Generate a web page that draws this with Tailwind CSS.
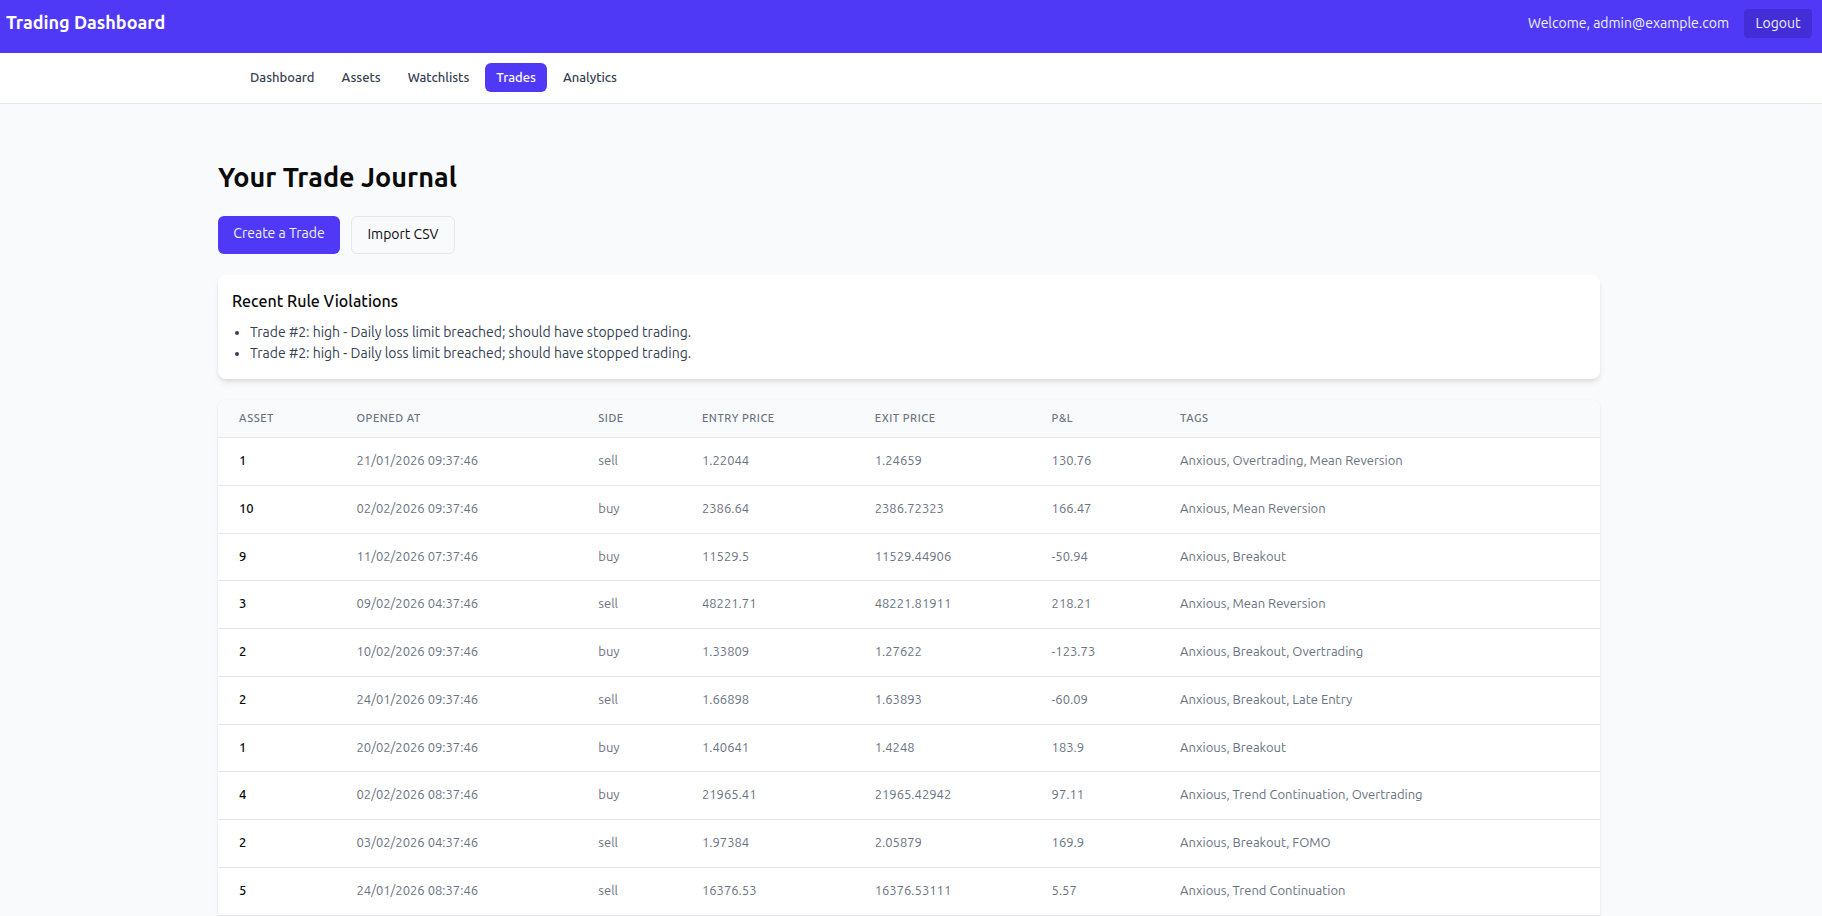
<!DOCTYPE html>
<html lang="en">
<head>
<meta charset="utf-8">
<meta name="viewport" content="width=device-width, initial-scale=1">
<title>Trading Dashboard</title>
<script src="https://cdn.jsdelivr.net/npm/@tailwindcss/browser@4"></script>
</head>
<body class="min-h-screen overflow-hidden bg-gray-50 font-['Ubuntu','Noto_Sans',sans-serif] text-sm text-neutral-950">
<header class="flex h-[53px] items-start justify-between bg-indigo-600 pt-[9px] pr-[10px] pl-[6px] text-white">
  <h1 class="text-lg leading-[26px] font-semibold">Trading Dashboard</h1>
  <div class="flex items-center gap-[15px]">
    <span class="pb-0.5 text-indigo-50">Welcome, admin@example.com</span>
    <button type="button" class="h-[29px] min-w-[68px] rounded-sm bg-indigo-700 pb-0.5 text-center text-indigo-50">Logout</button>
  </div>
</header>
<nav class="border-b border-gray-200 bg-white pr-1">
  <div class="mx-auto flex h-[50px] max-w-[1382px] items-center gap-[5px] px-[21px] pb-px text-[13px] leading-[17px] font-medium text-gray-700">
    <a href="#" class="rounded-md px-[11px] py-[6px]">Dashboard</a>
    <a href="#" class="rounded-md px-[11px] py-[6px]">Assets</a>
    <a href="#" class="rounded-md px-[11px] py-[6px]">Watchlists</a>
    <a href="#" aria-current="page" class="rounded-md bg-indigo-600 px-[11px] py-[6px] text-white">Trades</a>
    <a href="#" class="rounded-md px-[11px] py-[6px]">Analytics</a>
  </div>
</nav>
<main class="pr-1">
  <div class="mx-auto max-w-[1382px] pt-[57px]">
    <h2 class="text-[27px] leading-8 font-semibold">Your Trade Journal</h2>
    <div class="mt-[23px] flex gap-[11px]">
      <a href="#" class="h-[38px] min-w-[122px] rounded-md bg-indigo-600 px-[14px] pt-[7px] text-center text-indigo-50">Create a Trade</a>
      <button type="button" class="h-[38px] min-w-[104px] rounded-md border border-gray-200 px-[14px] pb-0.5">Import CSV</button>
    </div>
    <section class="mt-[21px] h-[104px] rounded-lg bg-white p-[14px] shadow-md">
      <h3 class="text-base leading-6 font-medium">Recent Rule Violations</h3>
      <ul class="mt-[9px] list-disc pl-[18px] leading-[21px] text-gray-700">
        <li>Trade #2: high - Daily loss limit breached; should have stopped trading.</li>
        <li>Trade #2: high - Daily loss limit breached; should have stopped trading.</li>
      </ul>
    </section>
    <div class="mt-[21px] overflow-hidden rounded-t-lg bg-white shadow-sm">
      <table class="w-full table-fixed border-collapse text-left text-[13px] text-gray-500">
        <colgroup>
          <col class="w-[8.5%]"><col class="w-[17.5%]"><col class="w-[7.5%]"><col class="w-[12.5%]"><col class="w-[12.8%]"><col class="w-[9.3%]"><col>
        </colgroup>
        <thead class="bg-gray-50 text-[11px] tracking-wider uppercase">
          <tr class="h-[37px] border-b border-gray-200">
            <th scope="col" class="px-[21px] pt-0.5 font-medium">Asset</th>
            <th scope="col" class="px-[21px] pt-0.5 font-medium">Opened At</th>
            <th scope="col" class="px-[21px] pt-0.5 font-medium">Side</th>
            <th scope="col" class="px-[21px] pt-0.5 font-medium">Entry Price</th>
            <th scope="col" class="px-[21px] pt-0.5 font-medium">Exit Price</th>
            <th scope="col" class="px-[21px] pt-0.5 font-medium">P&amp;L</th>
            <th scope="col" class="px-[21px] pt-0.5 font-medium">Tags</th>
          </tr>
        </thead>
        <tbody id="trades"></tbody>
      </table>
    </div>
  </div>
</main>
<script>
const trades = [
  ["1", "21/01/2026 09:37:46", "sell", "1.22044", "1.24659", "130.76", "Anxious, Overtrading, Mean Reversion"],
  ["10", "02/02/2026 09:37:46", "buy", "2386.64", "2386.72323", "166.47", "Anxious, Mean Reversion"],
  ["9", "11/02/2026 07:37:46", "buy", "11529.5", "11529.44906", "-50.94", "Anxious, Breakout"],
  ["3", "09/02/2026 04:37:46", "sell", "48221.71", "48221.81911", "218.21", "Anxious, Mean Reversion"],
  ["2", "10/02/2026 09:37:46", "buy", "1.33809", "1.27622", "-123.73", "Anxious, Breakout, Overtrading"],
  ["2", "24/01/2026 09:37:46", "sell", "1.66898", "1.63893", "-60.09", "Anxious, Breakout, Late Entry"],
  ["1", "20/02/2026 09:37:46", "buy", "1.40641", "1.4248", "183.9", "Anxious, Breakout"],
  ["4", "02/02/2026 08:37:46", "buy", "21965.41", "21965.42942", "97.11", "Anxious, Trend Continuation, Overtrading"],
  ["2", "03/02/2026 04:37:46", "sell", "1.97384", "2.05879", "169.9", "Anxious, Breakout, FOMO"],
  ["5", "24/01/2026 08:37:46", "sell", "16376.53", "16376.53111", "5.57", "Anxious, Trend Continuation"]
];
const body = document.getElementById("trades");
for (const trade of trades) {
  const row = body.insertRow();
  row.className = "h-12 border-b border-gray-200 nth-[4n+3]:h-[47px]";
  trade.forEach((value, i) => {
    const cell = row.insertCell();
    cell.className = i === 0 ? "px-[21px] pb-px font-medium text-neutral-950" : "px-[21px] pb-px";
    cell.textContent = value;
  });
}
</script>
</body>
</html>
